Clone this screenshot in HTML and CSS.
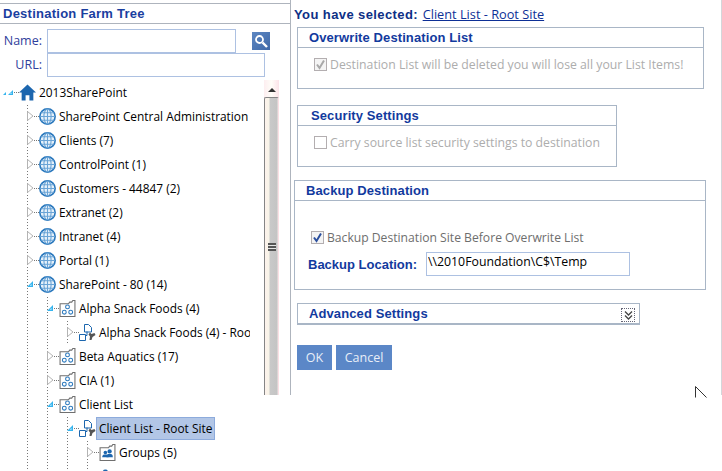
FILE: index.html
```html
<!DOCTYPE html>
<html lang="en">
<head>
<meta charset="UTF-8" />
<title>Destination Farm Tree</title>
<link rel="stylesheet" href="styles.css">
</head>
<body>
<svg class="sprites" aria-hidden="true">
  <symbol id="toggle-closed" viewBox="0 0 8 12"><path d="M1.500 1.500 7 6l-5.500 4.500z" fill="#fff" stroke="#b4b4b4"/></symbol>
  <symbol id="toggle-open" viewBox="0 0 8 12"><path d="M7 3v6H1z" fill="#35b4ee"/><path d="M5.500 6v1.700H3.800z" fill="#d8f2fd"/></symbol>
  <symbol id="toggle-root" viewBox="0 0 12 12"><path d="M4 6v3H1z" fill="#35b4ee"/><path d="M11 4v5H6z" fill="#35b4ee"/><path d="M9.500 6.500V8H8z" fill="#d8f2fd"/></symbol>
  <symbol id="home" viewBox="0 0 16 16"><path d="M8 .5 16 8h-2.500v7.500H9.800v-5H6.200v5H2.500V8H0z" fill="#1c66ae"/></symbol>
  <symbol id="globe" viewBox="0 0 16 16"><g fill="none" stroke="#2a78bd"><circle cx="8" cy="8" r="7.200" fill="#e6f1fa" stroke-width="1.500"/><ellipse cx="8" cy="8" rx="3.400" ry="7" stroke="#6aa4d6"/><path d="M8 1v14M1 8h14M2 4.500h12M2 11.500h12" stroke="#6aa4d6"/></g></symbol>
  <symbol id="collection" viewBox="0 0 15 16"><path d="M.5 3.500h8l1-1.500h2l1-1.500h2v15H.500z" fill="#fff" stroke="#6f6f6f"/><g fill="#fff" stroke="#2a78bd"><circle cx="7.500" cy="6.500" r="1.800"/><circle cx="4.500" cy="11.500" r="1.800"/><circle cx="10.500" cy="11.500" r="1.800"/></g></symbol>
  <symbol id="site" viewBox="0 0 17 17"><path d="M5.500.5h4l3 3v4.500h-7z" fill="#fff" stroke="#1c66ae"/><path d="M.5 10.500h6v6h-6z" fill="#fff" stroke="#1c66ae"/><path d="M8 7.500v4H6.500" fill="none" stroke="#1c66ae"/><path d="M11 8.500l1.500 1.500 3-1 1 2-3 2-1 3h-2l.5-3.500-1.500-2z" fill="#555"/></symbol>
  <symbol id="groups" viewBox="0 0 15 16"><path d="M.5 3.500h8l1-1.500h2l1-1.500h2v15H.500z" fill="#fff" stroke="#6f6f6f"/><g fill="#1c66ae"><circle cx="9.500" cy="7" r="2"/><path d="M6.500 12.500c0-2.500 1-3 3-3s3 .5 3 3z"/><circle cx="5.500" cy="8" r="1.700"/><path d="M2.500 12.500c0-2.200 1-2.700 3-2.700s3 .5 3 2.700z"/></g></symbol>
  <symbol id="person" viewBox="0 0 15 16"><circle cx="5.500" cy="4" r="2.500" fill="#1c66ae"/><path d="M1 14c0-6 2-7 4.500-7s4.500 1 4.500 7z" fill="#1c66ae"/></symbol>
</svg>

<section class="farm-tree">
  <h2 class="tree-title">Destination Farm Tree</h2>
  <div class="search-form">
    <label class="field-name" for="tree-name">Name:</label>
    <input class="text-input name-input" type="text" id="tree-name">
    <button class="search-btn" type="button" aria-label="Search">
      <svg width="14" height="14" viewBox="0 0 14 14"><circle cx="5.500" cy="5.500" r="3.500" fill="#4f7ab8" stroke="#fff" stroke-width="1.800"/><path d="M8.500 8.500 13 13" stroke="#fff" stroke-width="2.400"/></svg>
    </button>
    <label class="field-name" for="tree-url">URL:</label>
    <input class="text-input url-input" type="text" id="tree-url">
  </div>
  <div class="tree-pane">
    <div class="tree">
      <div class="node root-node">
        <svg class="toggle-root"><use href="#toggle-root"/></svg><i class="dash"></i>
        <svg class="icon"><use href="#home"/></svg><span class="node-text">2013SharePoint</span>
      </div>
      <ul class="branch">
        <li><div class="node"><svg class="toggle"><use href="#toggle-closed"/></svg><i class="dash"></i><svg class="icon"><use href="#globe"/></svg><span class="node-text">SharePoint Central Administration</span></div></li>
        <li><div class="node"><svg class="toggle"><use href="#toggle-closed"/></svg><i class="dash"></i><svg class="icon"><use href="#globe"/></svg><span class="node-text">Clients (7)</span></div></li>
        <li><div class="node"><svg class="toggle"><use href="#toggle-closed"/></svg><i class="dash"></i><svg class="icon"><use href="#globe"/></svg><span class="node-text">ControlPoint (1)</span></div></li>
        <li><div class="node"><svg class="toggle"><use href="#toggle-closed"/></svg><i class="dash"></i><svg class="icon"><use href="#globe"/></svg><span class="node-text">Customers - 44847 (2)</span></div></li>
        <li><div class="node"><svg class="toggle"><use href="#toggle-closed"/></svg><i class="dash"></i><svg class="icon"><use href="#globe"/></svg><span class="node-text">Extranet (2)</span></div></li>
        <li><div class="node"><svg class="toggle"><use href="#toggle-closed"/></svg><i class="dash"></i><svg class="icon"><use href="#globe"/></svg><span class="node-text">Intranet (4)</span></div></li>
        <li><div class="node"><svg class="toggle"><use href="#toggle-closed"/></svg><i class="dash"></i><svg class="icon"><use href="#globe"/></svg><span class="node-text">Portal (1)</span></div></li>
        <li>
          <div class="node"><svg class="toggle"><use href="#toggle-open"/></svg><i class="dash"></i><svg class="icon"><use href="#globe"/></svg><span class="node-text">SharePoint - 80 (14)</span></div>
          <ul class="branch">
            <li>
              <div class="node"><svg class="toggle"><use href="#toggle-open"/></svg><i class="dash"></i><svg class="icon"><use href="#collection"/></svg><span class="node-text">Alpha Snack Foods (4)</span></div>
              <ul class="branch">
                <li><div class="node"><svg class="toggle"><use href="#toggle-closed"/></svg><i class="dash"></i><svg class="icon"><use href="#site"/></svg><span class="node-text">Alpha Snack Foods (4) - Root Site</span></div></li>
              </ul>
            </li>
            <li><div class="node"><svg class="toggle"><use href="#toggle-closed"/></svg><i class="dash"></i><svg class="icon"><use href="#collection"/></svg><span class="node-text">Beta Aquatics (17)</span></div></li>
            <li><div class="node"><svg class="toggle"><use href="#toggle-closed"/></svg><i class="dash"></i><svg class="icon"><use href="#collection"/></svg><span class="node-text">CIA (1)</span></div></li>
            <li>
              <div class="node"><svg class="toggle"><use href="#toggle-open"/></svg><i class="dash"></i><svg class="icon"><use href="#collection"/></svg><span class="node-text">Client List</span></div>
              <ul class="branch">
                <li>
                  <div class="node"><svg class="toggle"><use href="#toggle-open"/></svg><i class="dash"></i><svg class="icon"><use href="#site"/></svg><span class="node-text selected">Client List - Root Site</span></div>
                  <ul class="branch">
                    <li><div class="node"><svg class="toggle"><use href="#toggle-closed"/></svg><i class="dash"></i><svg class="icon"><use href="#groups"/></svg><span class="node-text">Groups (5)</span></div></li>
                    <li><div class="node"><i class="toggle"></i><i class="dash"></i><svg class="icon"><use href="#person"/></svg></div></li>
                  </ul>
                </li>
              </ul>
            </li>
          </ul>
        </li>
      </ul>
    </div>
    <div class="scrollbar">
      <div class="scroll-up"></div>
      <div class="scroll-thumb"><span class="grip"></span></div>
    </div>
  </div>
</section>

<main class="details">
  <p class="selection"><strong>You have selected:</strong> <a href="#">Client List - Root Site</a></p>

  <section class="panel panel-overwrite">
    <h3 class="panel-title">Overwrite Destination List</h3>
    <div class="panel-body">
      <div class="check-row disabled"><span class="check-box"><svg width="11" height="11" viewBox="0 0 11 11"><path d="M2 5.500 4.500 9 9 1.500" fill="none" stroke="#a8a8a8" stroke-width="2"/></svg></span>Destination List will be deleted you will lose all your List Items!</div>
    </div>
  </section>

  <section class="panel panel-security">
    <h3 class="panel-title security-title">Security Settings</h3>
    <div class="panel-body">
      <div class="check-row disabled"><span class="check-box blank"></span>Carry source list security settings to destination</div>
    </div>
  </section>

  <section class="panel panel-backup">
    <h3 class="panel-title">Backup Destination</h3>
    <div class="panel-body">
      <div class="check-row enabled"><span class="check-box"><svg width="11" height="11" viewBox="0 0 11 11"><path d="M2 5.500 4.500 9 9 1.500" fill="none" stroke="#2b4f9e" stroke-width="2"/></svg></span>Backup Destination Site Before Overwrite List</div>
      <div class="location-row">
        <label class="location-label" for="backup-location">Backup Location:</label>
        <input class="text-input location-input" type="text" id="backup-location" value="\\2010Foundation\C$\Temp">
      </div>
    </div>
  </section>

  <section class="panel panel-advanced">
    <h3 class="panel-title">Advanced Settings</h3>
    <span class="expand-btn"><svg width="11" height="11" viewBox="0 0 11 11"><path d="M2 1.500 5.500 5 9 1.500M2 5.500 5.500 9 9 5.500" fill="none" stroke="#444" stroke-width="1.300"/></svg></span>
  </section>

  <div class="actions">
    <button class="btn btn-ok" type="button">OK</button>
    <button class="btn btn-cancel" type="button">Cancel</button>
  </div>

  <svg class="cursor" width="12" height="13" viewBox="0 0 12 13"><path d="M.5.500v11M.5.500l11 11" fill="none" stroke="#333"/></svg>
</main>
</body>
</html>
```

FILE: styles.css
```css
* {
  box-sizing: border-box;
}

html, body {
  height: 100%;
}

body {
  margin: 0;
  height: 471px;
  overflow: hidden;
  display: flex;
  align-items: flex-start;
  background: #fff;
  color: #111;
  font-family: "Open Sans", "Noto Sans", sans-serif;
  font-size: 12px;
}

.sprites {
  display: none;
}

/* left side */
.farm-tree {
  width: 290px;
  flex: none;
  height: 471px;
  overflow: hidden;
  padding-top: 3px;
}

.tree-title {
  margin: 0;
  height: 21px;
  padding-left: 3px;
  border-top: 1px solid #aeb4bd;
  border-bottom: 1px solid #aeb4bd;
  font: bold 13px/20px "Liberation Sans", sans-serif;
  letter-spacing: 0.25px;
  color: #1a3ea0;
}

.search-form {
  display: grid;
  grid-template-columns: 47px 189px 16px 18px 1fr;
  grid-template-rows: 24px 24px;
  margin-top: 5px;
  height: 51px;
}

.field-name {
  grid-column: 1;
  padding-right: 5px;
  text-align: right;
  line-height: 24px;
  color: #30409c;
  font-size: 12.5px;
}

.text-input {
  margin: 0;
  height: 24px;
  padding: 0 3px 5px 1px;
  border: 1px solid #adc1e2;
  border-radius: 0;
  outline: none;
  background: #fff;
  font: 12.3px "Open Sans", sans-serif;
  color: #000;
}

.name-input {
  width: 189px;
}

.search-btn {
  grid-column: 4;
  width: 18px;
  height: 18px;
  margin: 3px 0 0;
  padding: 0;
  border: none;
  background: linear-gradient(135deg, #5d87c2, #3f69a8);
  display: flex;
  align-items: center;
  justify-content: center;
}

.url-input {
  grid-column: 2 / span 3;
  width: 218px;
}

.tree-pane {
  display: flex;
  align-items: flex-start;
}

.tree {
  width: 250px;
  flex: none;
  overflow: hidden;
  padding-left: 27px;
}

.scrollbar {
  width: 15px;
  height: 315px;
  margin-left: 14px;
  flex: none;
  display: flex;
  flex-direction: column;
  background: linear-gradient(90deg, #fdeef0, #fffdf8 50%, #fbe3e8);
}

.scroll-up {
  height: 17px;
  position: relative;
}

.scroll-up::after {
  content: "";
  position: absolute;
  left: 4px;
  top: 8px;
  border-left: 4px solid transparent;
  border-right: 4px solid transparent;
  border-bottom: 4px solid #333;
}

.scroll-thumb {
  flex: 1;
  display: flex;
  align-items: center;
  justify-content: center;
  border-left: 1px solid #858585;
  border-right: 1px solid #fbdfe4;
  border-top: 1px solid #858585;
  border-radius: 2px 2px 0 0;
  background: linear-gradient(90deg, #fdf2ec 0, #f8f4e8 4px, #c9c9c9 5px, #c4c4c4 12px, #efe6e6 13px);
}

.grip {
  width: 8px;
  height: 8px;
  background: repeating-linear-gradient(#555 0 2px, #e4e4e4 2px 3px);
}

.node {
  display: flex;
  align-items: center;
  height: 24px;
  white-space: nowrap;
}

.root-node {
  margin-left: -25px;
}

.toggle-root {
  width: 12px;
  height: 12px;
  flex: none;
}

.toggle {
  width: 8px;
  height: 12px;
  margin-left: -1px;
  flex: none;
}

.dash {
  width: 5px;
  flex: none;
  border-top: 1px dotted #777;
}

.icon {
  width: 17px;
  height: 17px;
  flex: none;
}

.node-text {
  margin-left: 2px;
  padding: 0 1px;
  font-size: 11.9px;
  line-height: 22px;
  color: #000;
}

.selected {
  background: #b2c6e6;
  border: 1px solid #8dabdc;
  margin-left: 0;
  padding: 0 2px;
  line-height: 21px;
}

.branch {
  list-style: none;
  margin: 0;
  padding: 0;
  background: radial-gradient(circle, #777 0.5px, transparent 0.8px) 0 0 / 1px 3px repeat-y;
}

.branch .branch {
  margin-left: 20px;
}

/* right side */
.details {
  position: relative;
  width: 432px;
  height: 395px;
  flex: none;
  border-left: 1px solid #aeb4bd;
  border-right: 1px solid #d4d6da;
  padding-left: 3px;
  font-family: "Liberation Sans", sans-serif;
}

.selection {
  margin: 0;
  height: 27px;
  padding-top: 7px;
  font-size: 13px;
  line-height: 15px;
  color: #123a9a;
}

.selection strong {
  color: #0d2f86;
  letter-spacing: 0.4px;
}

.selection a {
  margin-left: 1px;
  color: #0d2f96;
  font-family: "Open Sans", sans-serif;
  font-size: 12.75px;
}

.panel {
  margin-left: 3px;
  border: 1px solid #a9b6c6;
}

.panel-title {
  margin: 0;
  height: 20px;
  padding-left: 11px;
  border-bottom: 1px solid #a9b6c6;
  font: bold 13px/20px "Liberation Sans", sans-serif;
  letter-spacing: 0.1px;
  color: #123a9e;
}

.security-title {
  padding-left: 13px;
}

.panel-overwrite {
  width: 407px;
  height: 62px;
}

.panel-security {
  width: 320px;
  height: 62px;
  margin-top: 16px;
}

.panel-backup {
  width: 412px;
  height: 110px;
  margin-top: 13px;
  margin-left: 0;
}

.panel-advanced {
  display: flex;
  justify-content: space-between;
  width: 343px;
  height: 22px;
  margin-top: 13px;
  border-bottom-width: 2px;
}

.panel-advanced .panel-title {
  border: none;
}

.expand-btn {
  width: 14px;
  height: 14px;
  margin: 4px 4px 0 0;
  border: 1px dotted #667;
  display: flex;
  align-items: center;
  justify-content: center;
}

.panel-body {
  padding: 6px 16px 0;
}

.check-row {
  display: flex;
  align-items: center;
  height: 20px;
  font-family: "Open Sans", sans-serif;
  font-size: 12.25px;
}

.disabled {
  color: #adadad;
}

.enabled {
  color: #6e6e6e;
  font-size: 12.15px;
}

.check-box {
  width: 13px;
  height: 13px;
  margin-right: 3px;
  border: 1px solid #b3aeb0;
  background: #f4f4f4;
  display: flex;
  align-items: center;
  justify-content: center;
}

.blank {
  background: #fff;
}

.panel-backup .panel-body {
  padding: 26px 16px 0;
}

.location-row {
  display: flex;
  align-items: center;
  margin: 5px 0 0 -3px;
}

.location-label {
  width: 118px;
  font-weight: bold;
  font-size: 13px;
  white-space: nowrap;
  color: #123a9e;
}

.location-input {
  width: 204px;
}

.actions {
  display: flex;
  gap: 4px;
  margin: 20px 0 0 3px;
}

.btn {
  height: 25px;
  padding: 0;
  border: none;
  background: #5b87c7;
  color: #e8eef8;
  font: 12.5px "Open Sans", sans-serif;
}

.btn-ok {
  width: 35px;
}

.btn-cancel {
  width: 56px;
}

.cursor {
  position: absolute;
  left: 404px;
  top: 386px;
}
```
